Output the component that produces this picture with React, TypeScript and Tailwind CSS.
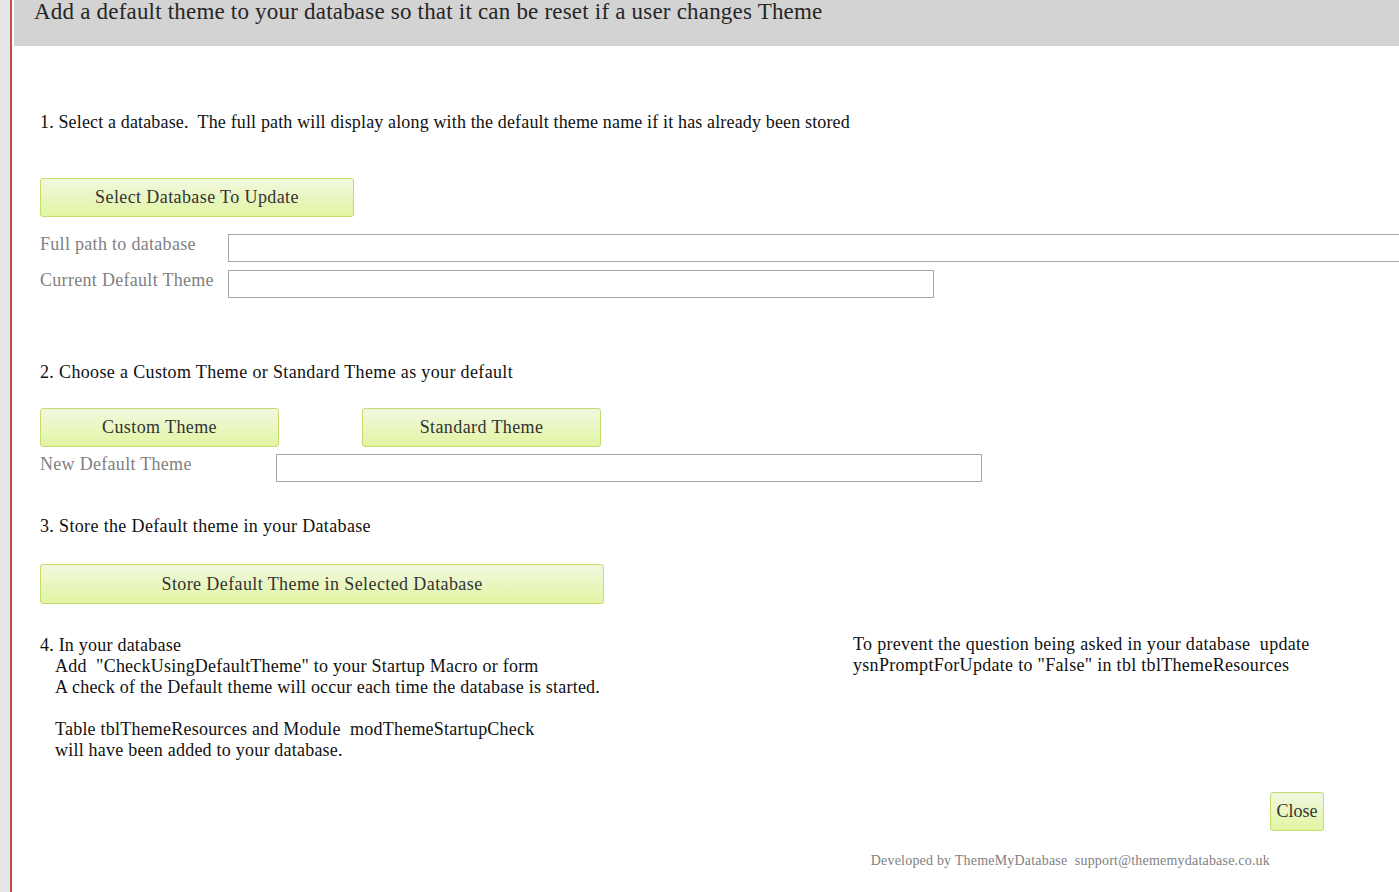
import React from "react";

const serif = { fontFamily: '"Liberation Serif", "Times New Roman", serif' };

function GreenButton({ label, className }: { label: string; className: string }) {
  return (
    <button
      className={`flex items-center justify-center rounded-[3px] border border-[#c5dc6a] bg-gradient-to-b from-[#f1f8df] to-[#e2f5a2] text-[18px] text-[#333] ${className}`}
    >
      {label}
    </button>
  );
}

export default function App() {
  return (
    <div className="flex h-[892px] w-[1399px] overflow-hidden bg-white" style={serif}>
      <div className="w-[10px] shrink-0 bg-[#e6e6e6]" />
      <div className="w-[2px] shrink-0 bg-[#c0504d]" />
      <div className="flex min-w-0 flex-1 flex-col pl-[2px]">
        <div className="h-[46px] shrink-0 bg-[#d3d3d3] pl-[20px]">
          <div className="text-[23px] leading-[24px] tracking-[0.2px] text-[#262626]">
            Add a default theme to your database so that it can be reset if a user changes Theme
          </div>
        </div>
        <div className="flex flex-col pl-[26px] tracking-[0.22px]">
          <div className="mt-[66px] text-[18px] leading-[21px] tracking-[0.15px] text-[#111]">
            1. Select a database.&nbsp; The full path will display along with the default theme name if it has already been stored
          </div>
          <GreenButton label="Select Database To Update" className="mt-[45px] h-[39px] w-[314px] tracking-[0.4px]" />
          <div className="mt-[17px] flex items-start">
            <div className="w-[188px] text-[18px] leading-[21px] tracking-[0.3px] text-[#7f7f7f]">Full path to database</div>
            <div className="h-[28px] flex-1 border border-r-0 border-[#a6a6a6]" />
          </div>
          <div className="mt-[8px] flex items-start">
            <div className="w-[188px] text-[18px] leading-[21px] tracking-[0.3px] text-[#7f7f7f]">Current Default Theme</div>
            <div className="h-[28px] w-[706px] border border-[#a6a6a6]" />
          </div>
          <div className="mt-[64px] text-[18px] leading-[21px] tracking-[0.35px] text-[#111]">
            2. Choose a Custom Theme or Standard Theme as your default
          </div>
          <div className="mt-[25px] flex gap-[83px]">
            <GreenButton label="Custom Theme" className="h-[39px] w-[239px] tracking-[0.4px]" />
            <GreenButton label="Standard Theme" className="h-[39px] w-[239px] tracking-[0.4px]" />
          </div>
          <div className="mt-[7px] flex items-start">
            <div className="w-[236px] text-[18px] leading-[21px] tracking-[0.3px] text-[#7f7f7f]">New Default Theme</div>
            <div className="h-[28px] w-[706px] border border-[#a6a6a6]" />
          </div>
          <div className="mt-[34px] text-[18px] leading-[21px] tracking-[0.35px] text-[#111]">
            3. Store the Default theme in your Database
          </div>
          <GreenButton label="Store Default Theme in Selected Database" className="mt-[27px] h-[40px] w-[564px] tracking-[0.4px]" />
          <div className="mt-[31px] flex text-[18px] leading-[21px] text-[#111]">
            <div className="w-[813px]">
              <div>4. In your database</div>
              <div className="pl-[15px]">Add&nbsp; "CheckUsingDefaultTheme" to your Startup Macro or form</div>
              <div className="pl-[15px]">A check of the Default theme will occur each time the database is started.</div>
              <div className="h-[21px]" />
              <div className="pl-[15px]">Table tblThemeResources and Module&nbsp; modThemeStartupCheck</div>
              <div className="pl-[15px]">will have been added to your database.</div>
            </div>
            <div className="-mt-[1px] tracking-[0.3px]">
              <div>To prevent the question being asked in your database&nbsp; update</div>
              <div>ysnPromptForUpdate to "False" in tbl tblThemeResources</div>
            </div>
          </div>
        </div>
        <div className="mt-[31px] flex justify-end pr-[75px]">
          <GreenButton label="Close" className="h-[39px] w-[54px]" />
        </div>
        <div className="mt-[22px] flex justify-end pr-[129px] text-[14px] leading-[16px] tracking-[0.2px] text-[#7f7f7f]">
          Developed by ThemeMyDatabase&nbsp; support@thememydatabase.co.uk
        </div>
      </div>
    </div>
  );
}
